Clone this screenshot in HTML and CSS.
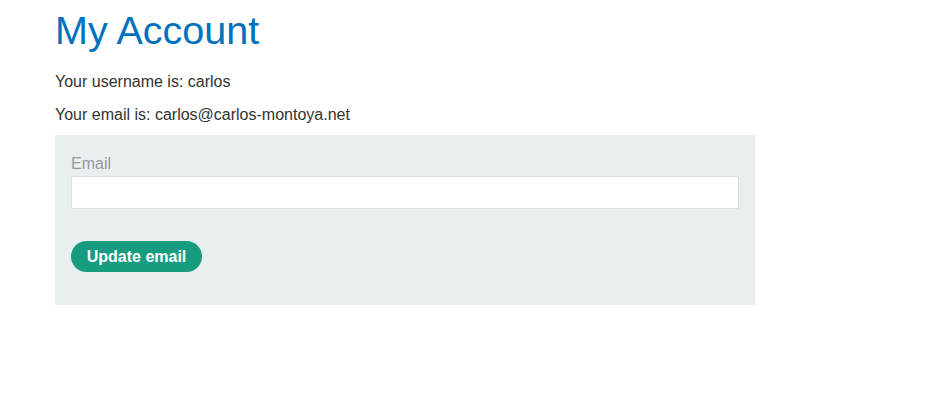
FILE: index.html
```html
<!DOCTYPE html>
<html>
<head>
<meta charset="utf-8">
<link rel="stylesheet" href="styles.css">
</head>
<body>
<div class="page">
  <h1 class="title">My Account</h1>
  <p class="info info-first">Your username is: carlos</p>
  <p class="info">Your email is: carlos@carlos-montoya.net</p>
  <form class="email-form">
    <label class="label" for="email">Email</label>
    <input class="input" id="email" type="email" name="email">
    <button class="btn" type="button">Update email</button>
  </form>
</div>
</body>
</html>
```
FILE: styles.css
```css
* { box-sizing: border-box; }
html, body { margin: 0; padding: 0; background: #fff; }
body {
  font-family: "Liberation Sans", Arial, sans-serif;
  color: #333332;
  font-size: 16px;
}
.page {
  padding-left: 55px;
  width: 755px;
}
.title {
  margin: 7px 0 0;
  font-size: 39.5px;
  line-height: 46px;
  font-weight: normal;
  color: #0071bc;
}
.info {
  margin: 18px 0 0;
  line-height: 18px;
}
.info-first { margin-top: 20px; }
.info + .info { margin-top: 15px; }
.email-form {
  margin-top: 11px;
  background: #e9eef1;
  padding: 20px 16px 33px;
  display: flex;
  flex-direction: column;
  align-items: flex-start;
  height: 170px;
}
.label {
  color: #999;
  font-size: 16px;
  line-height: 18px;
}
.input {
  margin-top: 3px;
  width: 100%;
  height: 33px;
  border: 1px solid #e0e0e0;
  background: #fff;
  font: inherit;
}
.btn {
  margin-top: 32px;
  height: 31px;
  width: 131px;
  border: none;
  border-radius: 16px;
  background: #189c80;
  color: #fff;
  font-family: "Liberation Sans", Arial, sans-serif;
  font-weight: bold;
  font-size: 16px;
  padding: 0;
}
```
